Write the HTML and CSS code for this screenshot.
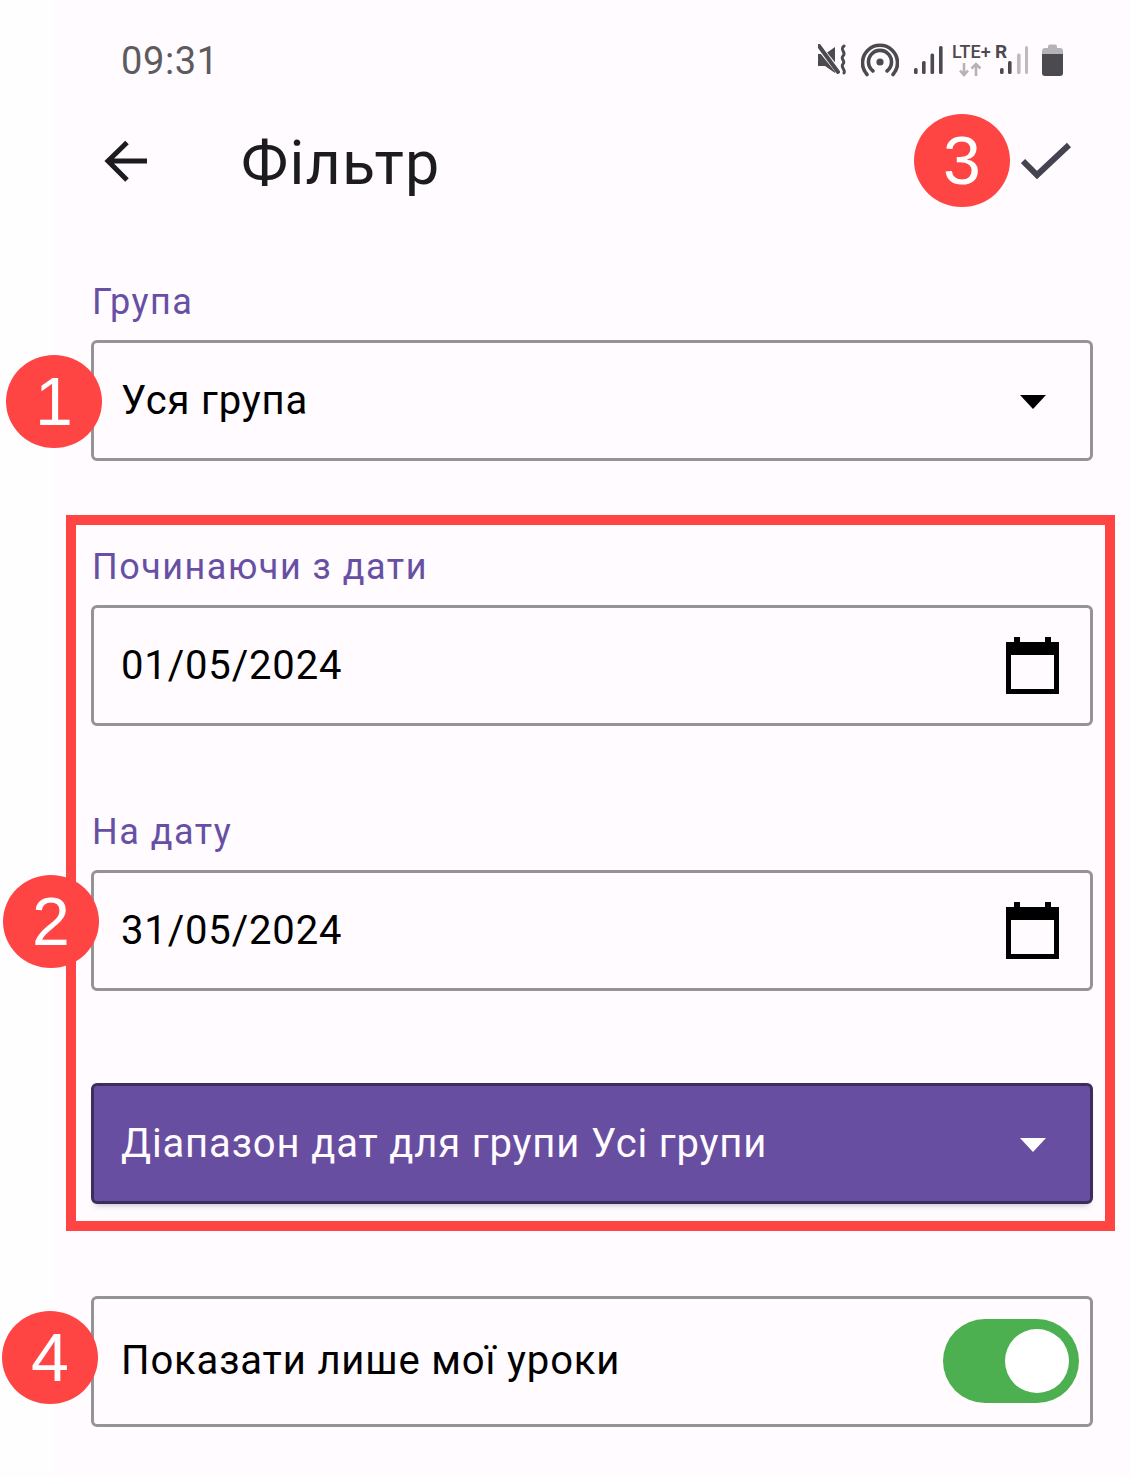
FILE: index.html
```html
<!DOCTYPE html>
<html lang="uk">
<head>
  <meta charset="UTF-8">
  <meta name="viewport" content="width=device-width, initial-scale=1.0">
  <title>Фільтр</title>
  <link rel="stylesheet" href="styles.css">
</head>
<body>
  <div class="screen">
    <!-- Status bar -->
    <div class="status-bar">
      <span class="time">09:31</span>
      <div class="status-icons">
        <svg class="ic-mute" width="31" height="32" viewBox="0 0 31 32">
          <path d="M0 10h7L17 3v26L7 22H0z" fill="#4b4a50"/>
          <path d="M1 3l20 25" stroke="#fffbfe" stroke-width="6"/>
          <path d="M1 2l19 26" stroke="#4b4a50" stroke-width="4" stroke-linecap="round"/>
          <path d="M26 2c-5 4 3 6-1 10-3 3 3 5 0 8-3 3 3 6 1 9" fill="none" stroke="#4b4a50" stroke-width="3" stroke-linecap="round"/>
        </svg>
        <svg class="ic-hotspot" width="38" height="34" viewBox="0 0 38 34">
          <circle cx="19" cy="19" r="3.600" fill="#4b4a50"/>
          <path d="M12 28a11.500 11.500 0 1 1 14 0" fill="none" stroke="#4b4a50" stroke-width="3.600" stroke-linecap="round"/>
          <path d="M6 31.500a17.500 17.500 0 1 1 26 0" fill="none" stroke="#4b4a50" stroke-width="3.600" stroke-linecap="round"/>
        </svg>
        <svg class="ic-signal" width="30" height="30" viewBox="0 0 30 30">
          <rect x="0" y="22" width="3.600" height="6" rx="1.500" fill="#4b4a50"/>
          <rect x="8" y="15" width="3.600" height="13" rx="1.500" fill="#4b4a50"/>
          <rect x="16.500" y="7.500" width="3.600" height="20.500" rx="1.500" fill="#4b4a50"/>
          <rect x="25" y="0" width="3.600" height="28" rx="1.500" fill="#4b4a50"/>
        </svg>
        <svg class="ic-lte" width="76" height="34" viewBox="0 0 76 34">
          <text x="0" y="14" class="lte-text">LTE+</text>
          <text x="43" y="14" class="lte-text lte-roam">R</text>
          <path d="M12 19v12M8 26.500l4 4.500 4-4.500M24 32V20M19.500 24.500l4.500-4.500 4.500 4.500" fill="none" stroke="#b5b3b8" stroke-width="2.600"/>
          <rect x="48" y="24" width="3.600" height="6" rx="1.500" fill="#4b4a50"/>
          <rect x="56" y="17" width="3.600" height="13" rx="1.500" fill="#4b4a50"/>
          <rect x="65" y="9.500" width="3.600" height="20.500" rx="1.500" fill="#bdbbc0"/>
          <rect x="73" y="2" width="3" height="28" rx="1.500" fill="#bdbbc0"/>
        </svg>
        <svg class="ic-battery" width="21" height="32" viewBox="0 0 21 32">
          <path d="M6 2.500a2 2 0 0 1 2-2h5a2 2 0 0 1 2 2V4h3a3 3 0 0 1 3 3v3H0V7a3 3 0 0 1 3-3h3z" fill="#b5b3b8"/>
          <path d="M0 10h21v19a3 3 0 0 1-3 3H3a3 3 0 0 1-3-3z" fill="#4b4a50"/>
        </svg>
      </div>
    </div>

    <!-- App bar -->
    <div class="app-bar">
      <svg class="back" width="44" height="44" viewBox="0 0 44 44">
        <path d="M43 21H4M23 2.500L4 21l19 19" fill="none" stroke="#1c1b1f" stroke-width="5"/>
      </svg>
      <h1>Фільтр</h1>
      <svg class="check" width="50" height="38" viewBox="0 0 50 38">
        <path d="M2 19l14 14L48 3" fill="none" stroke="#45434f" stroke-width="6"/>
      </svg>
    </div>

    <div class="form">
      <div class="field">
        <label class="field-label">Група</label>
        <div class="box">
          <span>Уся група</span>
          <span class="caret"></span>
        </div>
      </div>

      <div class="range-group">
        <div class="field">
          <label class="field-label">Починаючи з дати</label>
          <div class="box">
            <span>01/05/2024</span>
            <svg class="calendar" width="53" height="57" viewBox="0 0 53 57">
              <path d="M8 0h6v6H8zM39 0h6v6h-6z" fill="#000"/>
              <path fill-rule="evenodd" d="M0 5h53v52H0zM5 18v34h43V18z" fill="#000"/>
            </svg>
          </div>
        </div>
        <div class="field field-to">
          <label class="field-label">На дату</label>
          <div class="box">
            <span>31/05/2024</span>
            <svg class="calendar" width="53" height="57" viewBox="0 0 53 57">
              <path d="M8 0h6v6H8zM39 0h6v6h-6z" fill="#000"/>
              <path fill-rule="evenodd" d="M0 5h53v52H0zM5 18v34h43V18z" fill="#000"/>
            </svg>
          </div>
        </div>
        <div class="box box-purple">
          <span>Діапазон дат для групи Усі групи</span>
          <span class="caret caret-white"></span>
        </div>
      </div>

      <div class="box box-toggle">
        <span>Показати лише мої уроки</span>
        <div class="toggle"><div class="thumb"></div></div>
      </div>
    </div>

    <!-- Numbered callouts -->
    <div class="badge badge-1">1</div>
    <div class="badge badge-2">2</div>
    <div class="badge badge-3">3</div>
    <div class="badge badge-4">4</div>
  </div>
</body>
</html>
```

FILE: styles.css
```css
/* General Styles */
html, body {
  margin: 0;
  padding: 0;
  background: #fffeff;
}

body {
  font-family: Roboto, sans-serif;
  width: 1131px;
  height: 1477px;
  overflow: hidden;
}

.screen {
  position: relative;
  margin-left: 53px;
  height: 1477px;
  padding: 0 38px;
  box-sizing: border-box;
  background: #fffbfe;
}

/* Status bar */
.status-bar {
  height: 115px;
  padding-top: 39px;
  box-sizing: border-box;
  display: flex;
  justify-content: space-between;
}

.time {
  margin-left: 30px;
  font-size: 38px;
  line-height: 44px;
  letter-spacing: 0.6px;
  color: #5c5b60;
}

.status-icons {
  display: flex;
  align-items: flex-start;
  margin-right: 30px;
}

.ic-mute { margin-top: 5px; }
.ic-hotspot { margin: 4px 0 0 12px; }
.ic-signal { margin: 7px 0 0 15px; }
.ic-lte { margin: 5px 0 0 8px; overflow: visible; }
.ic-battery { margin: 5px 0 0 14px; }

.lte-text {
  font-family: Roboto, sans-serif;
  font-size: 18px;
  font-weight: 500;
  fill: #4b4a50;
}

.lte-roam {
  font-size: 19px;
  font-weight: 700;
}

/* App bar */
.app-bar {
  height: 92px;
  display: flex;
  align-items: center;
  position: relative;
}

.back {
  margin: 2px 0 0 13px;
}

h1 {
  margin: 3px 0 0 93px;
  font-size: 61px;
  font-weight: 400;
  letter-spacing: 1.3px;
  color: #1c1b1f;
}

.check {
  margin: 0 22px 0 auto;
}

/* Form */
.form {
  padding-top: 74px;
}

.field-label {
  display: block;
  height: 40px;
  line-height: 42px;
  margin-bottom: 19px;
  padding-left: 1px;
  font-size: 36px;
  letter-spacing: 1.5px;
  color: #6750a4;
}

.box {
  height: 121px;
  margin-bottom: -1px;
  box-sizing: border-box;
  border: 3px solid #949398;
  border-radius: 6px;
  padding: 0 31px 1px 27px;
  display: flex;
  align-items: center;
  justify-content: space-between;
  font-size: 40px;
  letter-spacing: 0.85px;
  color: #000;
}

.caret {
  width: 0;
  height: 0;
  margin: 3px 13px 0 0;
  border-left: 13.5px solid transparent;
  border-right: 13.5px solid transparent;
  border-top: 14px solid #000;
}

.caret-white {
  border-top-color: #fff;
}

.range-group {
  margin: 55px -22px 0 -25px;
  padding: 21px 12px 18px 15px;
  border: 10px solid #ff4444;
}

.field-to {
  margin-top: 86px;
}

.box-purple {
  margin-top: 93px;
  background: #674ea0;
  border-color: #3b2e5f;
  color: #fffbfe;
  box-shadow: 0 5px 6px -4px rgba(0, 0, 0, 0.25);
}

.box-toggle {
  height: 131px;
  margin-top: 65px;
  padding-right: 11px;
  padding-bottom: 2px;
}

.toggle {
  width: 136px;
  height: 84px;
  border-radius: 42px;
  background: #4caf50;
  display: flex;
  align-items: center;
  justify-content: flex-end;
  padding-right: 10px;
  box-sizing: border-box;
}

.thumb {
  width: 64px;
  height: 64px;
  border-radius: 50%;
  background: #fff;
}

/* Callouts sit on top of the screen */
.badge {
  position: absolute;
  width: 96px;
  height: 93px;
  border-radius: 50%;
  background: #ff4444;
  color: #fff;
  font-family: "Liberation Sans", Arial, sans-serif;
  font-size: 68px;
  line-height: 93px;
  text-align: center;
}

.badge-1 { left: -47px; top: 355px; }
.badge-2 { left: -50px; top: 875px; }
.badge-3 { left: 861px; top: 114px; }
.badge-4 { left: -51px; top: 1311px; }
```
